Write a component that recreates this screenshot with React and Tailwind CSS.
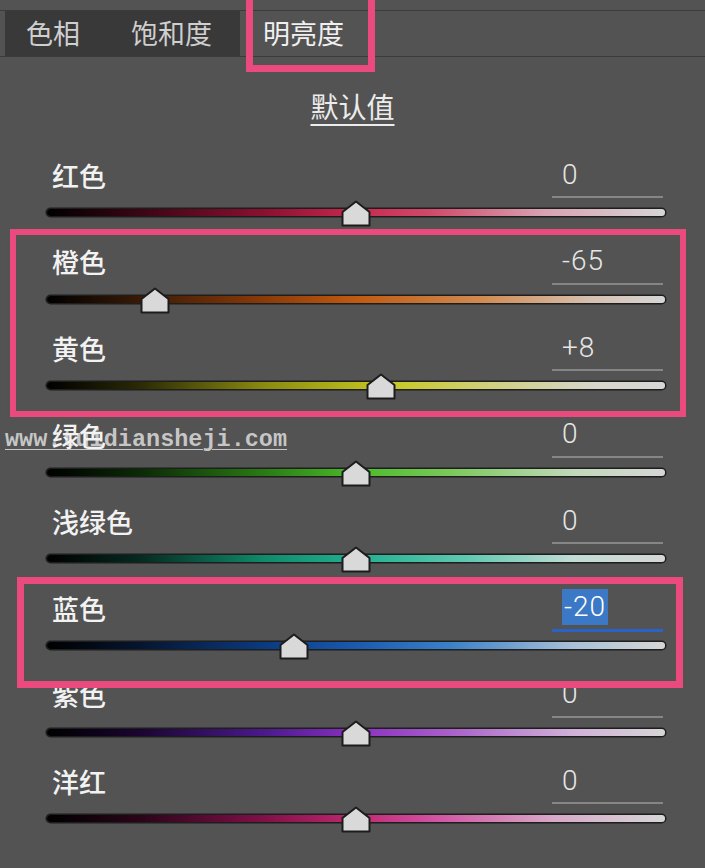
const rows = [
  {
    label: "红色",
    value: "0",
    v: 0,
    grad: "bg-[linear-gradient(to_right,#000_0%,#3a0614_15%,#8a1030_35%,#c8284e_50%,#d04a6a_62%,#d8a0b0_80%,#d6d6d6_100%)]",
  },
  {
    label: "橙色",
    value: "-65",
    v: -65,
    grad: "bg-[linear-gradient(to_right,#000_0%,#3a1a05_15%,#8a3a08_35%,#c05a10_50%,#d08a50_70%,#d6c0b0_88%,#d6d6d6_100%)]",
  },
  {
    label: "黄色",
    value: "+8",
    v: 8,
    grad: "bg-[linear-gradient(to_right,#000_0%,#2a2a05_15%,#8a8a10_35%,#c8c820_55%,#d0d080_72%,#d6d6c8_88%,#d6d6d6_100%)]",
  },
  {
    label: "绿色",
    value: "0",
    v: 0,
    grad: "bg-[linear-gradient(to_right,#000_0%,#0a2a05_15%,#2a7a15_35%,#4aba2a_50%,#7ac85a_65%,#c0d8b8_85%,#d6d6d6_100%)]",
  },
  {
    label: "浅绿色",
    value: "0",
    v: 0,
    grad: "bg-[linear-gradient(to_right,#000_0%,#052a20_15%,#108a6a_35%,#20b090_50%,#60c8b0_68%,#c0dcd4_85%,#d6d6d6_100%)]",
  },
  {
    label: "蓝色",
    value: "-20",
    v: -20,
    active: true,
    grad: "bg-[linear-gradient(to_right,#000_0%,#051530_15%,#0a3a80_35%,#1a5ab0_50%,#3a80c8_65%,#a8c0d8_85%,#d6d6d6_100%)]",
  },
  {
    label: "紫色",
    value: "0",
    v: 0,
    grad: "bg-[linear-gradient(to_right,#000_0%,#1a0530_15%,#4a1a8a_35%,#8a30c0_50%,#a860c8_65%,#d0b0d8_85%,#d6d6d6_100%)]",
  },
  {
    label: "洋红",
    value: "0",
    v: 0,
    grad: "bg-[linear-gradient(to_right,#000_0%,#2a0518_15%,#801048_35%,#c02870_50%,#d050a0_62%,#d8a8c8_82%,#d6d6d6_100%)]",
  },
];

function Thumb({ v }) {
  return (
    <svg
      className="absolute top-[-9px] -translate-x-1/2"
      style={{ left: `${(v + 100) / 2}%` }}
      width="30"
      height="27"
      viewBox="0 0 30 27"
    >
      <polygon
        points="1.5,12 15,1.5 28.5,12 28.5,25.5 1.5,25.5"
        fill="#d9d9d9"
        stroke="#1c1c1c"
        strokeWidth="2"
        strokeLinejoin="round"
      />
    </svg>
  );
}

function SliderRow({ row }) {
  return (
    <div className="h-[86.6px] flex flex-col">
      <div className="h-[50px] flex">
        <div className="flex-1 pl-[52px] flex items-center pt-[2px] text-[27px] font-medium text-[#f2f2f2] relative z-10">
          {row.label}
        </div>
        <div className="w-[111px] mr-[42px] flex flex-col">
          <div className="h-[46px] flex items-center pl-[10px] pt-[3px] font-['Roboto','Liberation_Sans',sans-serif] font-light text-[28px] tracking-[1px] text-[#e6e6e6]">
            {row.active ? (
              <span className="bg-[#3b78c5] text-white px-[2px] h-[36px] leading-[36px] inline-block">
                {row.value}
              </span>
            ) : (
              row.value
            )}
          </div>
          <div
            className={
              row.active
                ? "h-[3px] bg-[#2a63c8]"
                : "h-[2px] bg-[#868686]"
            }
          />
        </div>
      </div>
      <div className="ml-[47px] w-[618px] relative mt-[9px]">
        <div
          className={`h-[7px] rounded-full shadow-[0_0_0_1.5px_#1e1e1e] ${row.grad}`}
        />
        <Thumb v={row.v} />
      </div>
    </div>
  );
}

export default function App() {
  return (
    <div className="w-[705px] h-[868px] bg-[#535353] relative overflow-hidden font-['Noto_Sans_CJK_SC','Noto_Sans',sans-serif]">
      {/* tabs */}
      <div className="mt-[10px] h-[47px] flex border-y border-[#3b3b3b] text-[27px]">
        <div className="ml-[5px] w-[235px] bg-[#393939] flex items-center pl-[21px] gap-[51px] text-[#cfcfcf]">
          <span>色相</span>
          <span>饱和度</span>
        </div>
        <div className="w-[140px] flex items-center pl-[23px] text-[#f0f0f0]">
          明亮度
        </div>
        <div className="flex-1" />
      </div>

      <div className="h-[93px] flex items-center justify-center pt-[5px]">
        <span className="text-[28px] text-[#ececec] underline underline-offset-[6px] decoration-[1.5px]">
          默认值
        </span>
      </div>

      {/* watermark */}
      <div className="absolute left-[5px] top-[422px] font-['Liberation_Mono',monospace] font-bold text-[23.5px] text-[#dcdcdc]/85 underline underline-offset-[3px] decoration-[1px] z-0">
        www.tuidiansheji.com
      </div>

      <div className="flex flex-col">
        {rows.map((r) => (
          <SliderRow key={r.label} row={r} />
        ))}
      </div>

      {/* highlight boxes */}
      <div className="absolute left-[246px] top-[-10px] w-[129px] h-[82px] border-[7px] border-[#ea4a7d] z-20" />
      <div className="absolute left-[10px] top-[229px] w-[676px] h-[188px] border-[6px] border-[#ea4a7d] z-20" />
      <div className="absolute left-[17px] top-[577px] w-[666px] h-[111px] border-[7px] border-[#ea4a7d] z-20" />
    </div>
  );
}
